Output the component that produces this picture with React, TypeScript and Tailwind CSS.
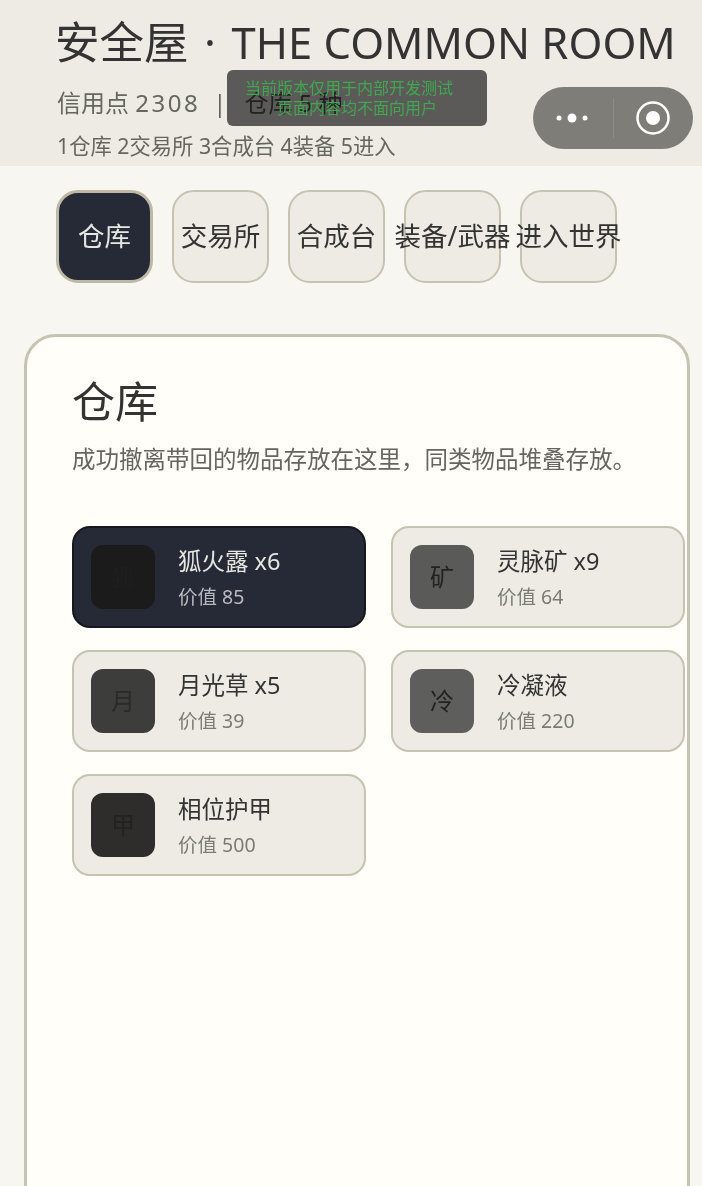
const tabs = ['仓库', '交易所', '合成台', '装备/武器', '进入世界'];

const items = [
  { name: '狐火露 x6', value: '价值 85', glyph: '狐', swatch: 'bg-[#1b1b1b] text-[#1e1e1e]', active: true },
  { name: '灵脉矿 x9', value: '价值 64', glyph: '矿', swatch: 'bg-[#5a5a58] text-[#222222]', active: false },
  { name: '月光草 x5', value: '价值 39', glyph: '月', swatch: 'bg-[#3d3d3b] text-[#2a2a2a]', active: false },
  { name: '冷凝液', value: '价值 220', glyph: '冷', swatch: 'bg-[#5e5e5c] text-[#222222]', active: false },
  { name: '相位护甲', value: '价值 500', glyph: '甲', swatch: 'bg-[#2e2d2c] text-[#222222]', active: false },
];

const font = "font-['Noto_Sans','Noto_Sans_CJK_SC',sans-serif]";

export default function App() {
  return (
    <div className={`relative h-[1186px] w-[702px] overflow-hidden bg-[#f8f6f0] text-[#333333] blur-[0.5px] ${font}`}>
      {/* header */}
      <div className="h-[166px] bg-[#edebe3] pl-[55px] pt-3">
        <div className="h-[60px] text-[44.5px] leading-[60px] whitespace-nowrap">
          安全屋 <span className="mx-[4px]">·</span> <span className="text-[43.5px]">THE COMMON ROOM</span>
        </div>
        <div className="mt-[11px] flex h-10 items-center pl-[2px] text-[24px] leading-10 whitespace-nowrap text-[#666660]">
          <span>信用点 <span className="tracking-[2.5px]">2308</span></span>
          <span className="ml-[13px]">|</span>
          <span className="ml-[18px] text-[#2f2f2f]">仓库 5 种</span>
        </div>
        <div className="mt-2 h-[30px] pl-[2px] text-[21.3px] leading-[30px] whitespace-nowrap text-[#66665f]">
          1仓库 2交易所 3合成台 4装备 5进入
        </div>
      </div>

      {/* tabs */}
      <div className="flex gap-[19px] pl-14 pt-6">
        {tabs.map((tab, i) => (
          <div
            key={tab}
            className={
              i === 0
                ? 'flex h-[93px] w-[97px] shrink-0 items-center justify-center rounded-[22px] border-[3px] border-[#bdb9a6] bg-[#262a36] text-[26.5px] whitespace-nowrap text-[#e6e6e2]'
                : 'flex h-[93px] w-[97px] shrink-0 items-center justify-center rounded-[22px] border-2 border-[#c6c3b2] bg-[#edebe3] text-[26.5px] whitespace-nowrap text-[#333333]'
            }
          >
            {tab}
          </div>
        ))}
      </div>

      {/* warehouse panel */}
      <div className="mx-6 mt-[51px] h-[900px] w-[666px] rounded-[32px] border-[3px] border-[#c6c3b2] bg-[#fffef9] pl-[45px] pt-[30px]">
        <h1 className="h-[70px] text-[43px] leading-[70px] font-normal">仓库</h1>
        <p className="mt-[2px] h-10 text-[23.5px] leading-10 whitespace-nowrap text-[#666660]">
          成功撤离带回的物品存放在这里，同类物品堆叠存放。
        </p>
        <div className="mt-[47px] grid grid-cols-[294px_294px] gap-x-[25px] gap-y-[22px]">
          {items.map((item) => (
            <div
              key={item.name}
              className={
                item.active
                  ? 'flex h-[102px] items-center gap-[23px] rounded-[18px] border-2 border-[#16181f] bg-[#262a36] pl-[17px]'
                  : 'flex h-[102px] items-center gap-[23px] rounded-[18px] border-2 border-[#c6c3b2] bg-[#edebe3] pl-[17px]'
              }
            >
              <div className={`flex h-16 w-16 shrink-0 items-center justify-center rounded-xl text-[24px] ${item.swatch}`}>
                {item.glyph}
              </div>
              <div>
                <div className={`h-9 text-[23.5px] leading-9 whitespace-nowrap ${item.active ? 'text-[#e6e6e2]' : 'text-[#333333]'}`}>
                  {item.name}
                </div>
                <div className={`mt-[4px] h-7 text-[19.5px] leading-7 whitespace-nowrap ${item.active ? 'text-[#b9bac0]' : 'text-[#7b7b75]'}`}>
                  {item.value}
                </div>
              </div>
            </div>
          ))}
        </div>
      </div>

      {/* dev build notice */}
      <div className="absolute left-[227px] top-[70px] flex h-[56px] w-[260px] flex-col items-center justify-center rounded-md bg-[#1d1d1d]/70 text-[16px] leading-[20px] text-[#3fa84f]">
        <div className="pr-4 whitespace-nowrap">当前版本仅用于内部开发测试</div>
        <div className="whitespace-nowrap">页面内容均不面向用户</div>
      </div>

      {/* mini program capsule */}
      <div className="absolute left-[533px] top-[87px] flex h-[62px] w-[160px] items-center rounded-full bg-[#7f7d78]">
        <svg className="ml-[19px]" width="40" height="20" viewBox="0 0 40 20">
          <circle cx="7" cy="10" r="2.5" fill="#fff" />
          <circle cx="20" cy="10" r="4.5" fill="#fff" />
          <circle cx="33" cy="10" r="2.5" fill="#fff" />
        </svg>
        <div className="ml-[21px] h-10 w-px bg-[#8e8c87]" />
        <svg className="ml-[21px]" width="36" height="36" viewBox="0 0 36 36">
          <circle cx="18" cy="18" r="15.5" fill="none" stroke="#fff" strokeWidth="2.5" />
          <circle cx="18" cy="18" r="7" fill="#fff" />
        </svg>
      </div>
    </div>
  );
}
